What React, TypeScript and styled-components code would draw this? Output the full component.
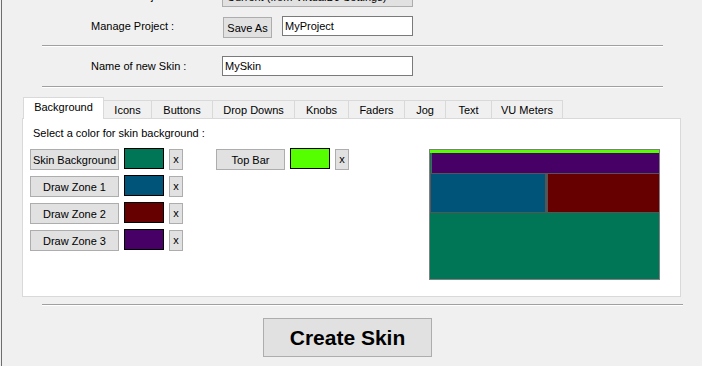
import React from 'react';
import styled, { createGlobalStyle } from 'styled-components';

const GlobalStyle = createGlobalStyle`
  html, body {
    margin: 0;
    padding: 0;
    background: #f0f0f0;
  }
  body {
    font-family: "Liberation Sans", Arial, sans-serif;
    font-size: 11px;
    color: #000;
  }
`;

const colors = {
  skinBg: '#007656',
  zone1: '#00547a',
  zone2: '#660000',
  zone3: '#470066',
  topBar: '#55ff00',
};

const tabs = [
  { name: 'Background', width: 81 },
  { name: 'Icons', width: 49 },
  { name: 'Buttons', width: 62 },
  { name: 'Drop Downs', width: 83 },
  { name: 'Knobs', width: 55 },
  { name: 'Faders', width: 57 },
  { name: 'Jog', width: 42 },
  { name: 'Text', width: 47 },
  { name: 'VU Meters', width: 72 },
];

const zones = [
  { label: 'Skin Background', color: colors.skinBg },
  { label: 'Draw Zone 1', color: colors.zone1 },
  { label: 'Draw Zone 2', color: colors.zone2 },
  { label: 'Draw Zone 3', color: colors.zone3 },
];

const ColorRow: React.FC<{ label: string; color: string; btnWidth: number }> = ({
  label,
  color,
  btnWidth,
}) => (
  <RowLine>
    <PickButton $w={btnWidth}>{label}</PickButton>
    <Swatch $color={color} />
    <ClearButton>x</ClearButton>
  </RowLine>
);

export default function App() {
  return (
    <>
      <GlobalStyle />
      <Window>
        <FormRow $top={-14}>
          <Label>Select a Project :</Label>
          <Dropdown>
            <span>Current (from VirtualDJ Settings)</span>
            <Arrow>▾</Arrow>
          </Dropdown>
        </FormRow>
        <FormRow $top={9}>
          <Label>Manage Project :</Label>
          <Controls>
            <SmallButton>Save As</SmallButton>
            <TextInput $w={131} defaultValue="MyProject" />
          </Controls>
        </FormRow>
        <Separator $w={621} $top={8} />
        <FormRow $top={9}>
          <Label>Name of new Skin :</Label>
          <TextInput $w={191} defaultValue="MySkin" />
        </FormRow>
        <Separator $w={621} $top={9} />

        <TabArea>
          <TabStrip>
            {tabs.map((t, i) => (
              <Tab key={t.name} $w={t.width} $active={i === 0}>
                {t.name}
              </Tab>
            ))}
          </TabStrip>
          <Panel>
            <Caption>Select a color for skin background :</Caption>
            <PanelBody>
              <ColorList>
                {zones.map((z) => (
                  <ColorRow key={z.label} label={z.label} color={z.color} btnWidth={89} />
                ))}
              </ColorList>
              <ColorList>
                <ColorRow label="Top Bar" color={colors.topBar} btnWidth={69} />
              </ColorList>
              <Preview>
                <PreviewTopBar />
                <PreviewZone3 />
                <PreviewZones>
                  <PreviewZone1 />
                  <PreviewZone2 />
                </PreviewZones>
              </Preview>
            </PanelBody>
          </Panel>
        </TabArea>

        <Separator $w={641} $top={7} />
        <CreateButton>Create Skin</CreateButton>
      </Window>
    </>
  );
}

const Window = styled.div`
  width: 701px;
  height: 366px;
  margin-left: 1px;
  border-left: 1px solid #6d6d6d;
  box-sizing: border-box;
  overflow: hidden;
  display: flex;
  flex-direction: column;
`;

const FormRow = styled.div<{ $top: number }>`
  display: grid;
  grid-template-columns: 131px auto;
  align-items: start;
  height: 21px;
  margin-top: ${(p) => p.$top}px;
  padding-left: 89px;
  flex-shrink: 0;
`;

const Label = styled.div`
  line-height: 21px;
  color: #000;
`;

const Controls = styled.div`
  display: flex;
  align-items: flex-start;
  gap: 10px;
`;

const Dropdown = styled.div`
  width: 191px;
  height: 21px;
  box-sizing: border-box;
  background: #e1e1e1;
  border: 1px solid #adadad;
  display: flex;
  align-items: center;
  justify-content: space-between;
  padding: 0 4px;
`;

const Arrow = styled.span`
  font-size: 10px;
  color: #606060;
`;

const SmallButton = styled.div`
  margin: 1px 0 0 1px;
  width: 49px;
  height: 21px;
  box-sizing: border-box;
  background: #e1e1e1;
  border: 1px solid #adadad;
  display: flex;
  align-items: center;
  justify-content: center;
`;

const TextInput = styled.input<{ $w: number }>`
  width: ${(p) => p.$w}px;
  height: 20px;
  box-sizing: border-box;
  margin: 0;
  border: 1px solid #7a7a7a;
  background: #fff;
  padding: 0 2px;
  font-family: inherit;
  font-size: 11px;
  color: #000;
  outline: none;
`;

const Separator = styled.div<{ $w: number; $top: number }>`
  flex-shrink: 0;
  width: ${(p) => p.$w}px;
  height: 1px;
  margin: ${(p) => p.$top}px 0 0 40px;
  background: #a0a0a0;
  border-bottom: 1px solid #fff;
`;

const TabArea = styled.div`
  margin: 9px 0 0 20px;
  width: 659px;
  flex-shrink: 0;
`;

const TabStrip = styled.div`
  display: flex;
  align-items: flex-end;
  height: 21px;
  padding-left: 1px;
`;

const Tab = styled.div<{ $w: number; $active: boolean }>`
  position: relative;
  z-index: ${(p) => (p.$active ? 2 : 1)};
  width: ${(p) => p.$w}px;
  height: ${(p) => (p.$active ? 22 : 18)}px;
  margin-bottom: ${(p) => (p.$active ? -1 : 0)}px;
  margin-left: -1px;
  &:first-child {
    margin-left: 0;
  }
  box-sizing: border-box;
  border: 1px solid #d9d9d9;
  border-bottom: none;
  background: ${(p) => (p.$active ? '#fff' : '#f0f0f0')};
  display: flex;
  align-items: center;
  justify-content: center;
  padding-bottom: ${(p) => (p.$active ? 3 : 0)}px;
`;

const Panel = styled.div`
  height: 179px;
  box-sizing: border-box;
  border: 1px solid #d9d9d9;
  background: #fff;
  padding: 8px 0 0 7px;
`;

const Caption = styled.div`
  line-height: 13px;
  margin-left: 3px;
`;

const PanelBody = styled.div`
  display: flex;
  align-items: flex-start;
  margin-top: 8px;
  gap: 33px;
`;

const ColorList = styled.div`
  display: flex;
  flex-direction: column;
  gap: 6px;
`;

const RowLine = styled.div`
  display: flex;
  align-items: flex-start;
  gap: 5px;
  height: 21px;
`;

const ButtonBase = styled.div`
  margin-top: 1px;
  height: 21px;
  box-sizing: border-box;
  background: #e1e1e1;
  border: 1px solid #adadad;
  display: flex;
  align-items: center;
  justify-content: center;
  white-space: nowrap;
`;

const PickButton = styled(ButtonBase)<{ $w: number }>`
  width: ${(p) => p.$w}px;
`;

const ClearButton = styled(ButtonBase)`
  width: 14px;
  padding-bottom: 2px;
`;

const Swatch = styled.div<{ $color: string }>`
  width: 40px;
  height: 21px;
  box-sizing: border-box;
  border: 1px solid #000;
  background: ${(p) => p.$color};
`;

const Preview = styled.div`
  margin: 1px 0 0 47px;
  width: 231px;
  height: 131px;
  box-sizing: border-box;
  border: 1px solid #808080;
  background: ${colors.skinBg};
  display: flex;
  flex-direction: column;
`;

const PreviewTopBar = styled.div`
  height: 3px;
  background: ${colors.topBar};
`;

const PreviewZone3 = styled.div`
  height: 20px;
  margin-left: 1px;
  box-sizing: border-box;
  border-left: 1px solid #5a5a5a;
  background: ${colors.zone3};
`;

const PreviewZones = styled.div`
  display: flex;
  height: 40px;
  box-sizing: border-box;
`;

const PreviewZone1 = styled.div`
  width: 116px;
  box-sizing: border-box;
  border: 1px solid #555;
  background: ${colors.zone1};
`;

const PreviewZone2 = styled.div`
  flex: 1;
  box-sizing: border-box;
  border: 1px solid #555;
  border-left-width: 2px;
  border-right: none;
  background: ${colors.zone2};
`;

const CreateButton = styled.div`
  flex-shrink: 0;
  margin: 12px 0 0 261px;
  width: 169px;
  height: 39px;
  box-sizing: border-box;
  background: #e1e1e1;
  border: 1px solid #adadad;
  display: flex;
  align-items: center;
  justify-content: center;
  font-family: "Liberation Sans", Arial, sans-serif;
  font-weight: bold;
  font-size: 21px;
`;
